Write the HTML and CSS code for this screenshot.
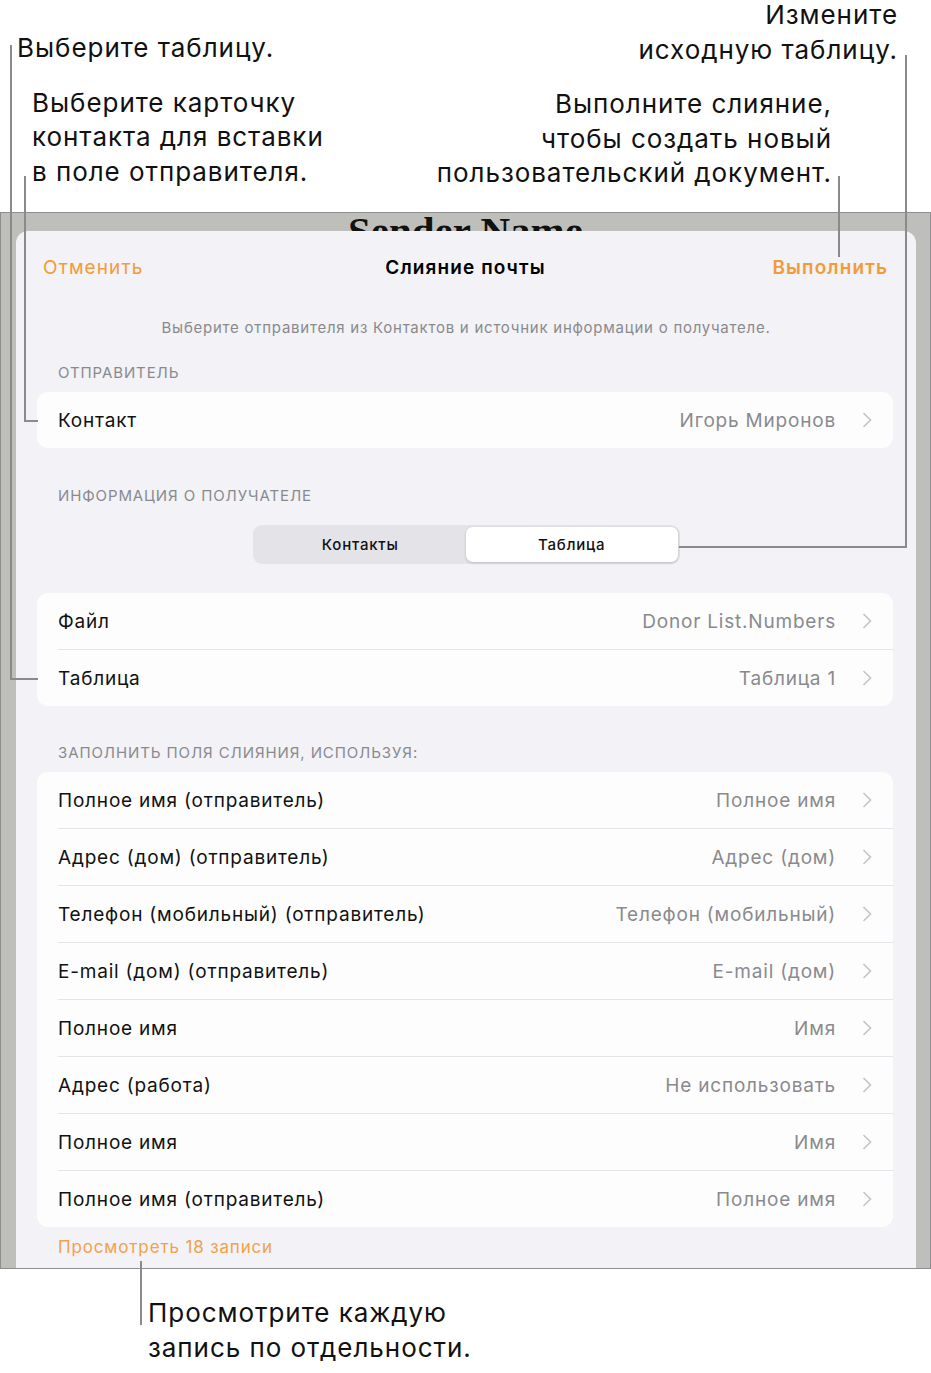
FILE: index.html
```html
<!DOCTYPE html>
<html lang="ru">
<head>
    <meta charset="UTF-8" />
    <title>Слияние почты</title>
    <link rel="stylesheet" href="styles.css">
</head>
<body>
    <div class="page">
        <div class="callouts-top">
            <div class="callouts-left">
                <p class="callout callout-table">Выберите таблицу.</p>
                <p class="callout callout-contact">Выберите карточку<br>контакта для вставки<br>в поле отправителя.</p>
            </div>
            <div class="callouts-right">
                <p class="callout callout-source">Измените<br>исходную таблицу.</p>
                <p class="callout callout-merge">Выполните слияние,<br>чтобы создать новый<br>пользовательский документ.</p>
            </div>
        </div>

        <div class="screen">
            <div class="doc-peek"><span>Sender Name</span></div>

            <div class="sheet">
                <div class="nav">
                    <span class="nav-btn">Отменить</span>
                    <span class="nav-title">Слияние почты</span>
                    <span class="nav-btn nav-btn-main">Выполнить</span>
                </div>

                <p class="hint">Выберите отправителя из Контактов и источник информации о получателе.</p>

                <h2 class="section-title first">Отправитель</h2>
                <div class="card">
                    <div class="row">
                        <span class="row-label">Контакт</span>
                        <span class="row-value">Игорь Миронов</span>
                        <svg class="chev" width="10" height="16" viewBox="0 0 10 16"><polyline points="1.5,1 8.5,8 1.5,15" /></svg>
                    </div>
                </div>

                <h2 class="section-title">Информация о получателе</h2>
                <div class="segmented">
                    <span class="seg">Контакты</span>
                    <span class="seg seg-on">Таблица</span>
                </div>

                <div class="card card-source">
                    <div class="row">
                        <span class="row-label">Файл</span>
                        <span class="row-value">Donor List.Numbers</span>
                        <svg class="chev" width="10" height="16" viewBox="0 0 10 16"><polyline points="1.5,1 8.5,8 1.5,15" /></svg>
                    </div>
                    <div class="row">
                        <span class="row-label">Таблица</span>
                        <span class="row-value">Таблица 1</span>
                        <svg class="chev" width="10" height="16" viewBox="0 0 10 16"><polyline points="1.5,1 8.5,8 1.5,15" /></svg>
                    </div>
                </div>

                <h2 class="section-title section-fields">Заполнить поля слияния, используя:</h2>
                <div class="card">
                    <div class="row">
                        <span class="row-label">Полное имя (отправитель)</span>
                        <span class="row-value">Полное имя</span>
                        <svg class="chev" width="10" height="16" viewBox="0 0 10 16"><polyline points="1.5,1 8.5,8 1.5,15" /></svg>
                    </div>
                    <div class="row">
                        <span class="row-label">Адрес (дом) (отправитель)</span>
                        <span class="row-value">Адрес (дом)</span>
                        <svg class="chev" width="10" height="16" viewBox="0 0 10 16"><polyline points="1.5,1 8.5,8 1.5,15" /></svg>
                    </div>
                    <div class="row">
                        <span class="row-label">Телефон (мобильный) (отправитель)</span>
                        <span class="row-value">Телефон (мобильный)</span>
                        <svg class="chev" width="10" height="16" viewBox="0 0 10 16"><polyline points="1.5,1 8.5,8 1.5,15" /></svg>
                    </div>
                    <div class="row">
                        <span class="row-label">E-mail (дом) (отправитель)</span>
                        <span class="row-value">E-mail (дом)</span>
                        <svg class="chev" width="10" height="16" viewBox="0 0 10 16"><polyline points="1.5,1 8.5,8 1.5,15" /></svg>
                    </div>
                    <div class="row">
                        <span class="row-label">Полное имя</span>
                        <span class="row-value">Имя</span>
                        <svg class="chev" width="10" height="16" viewBox="0 0 10 16"><polyline points="1.5,1 8.5,8 1.5,15" /></svg>
                    </div>
                    <div class="row">
                        <span class="row-label">Адрес (работа)</span>
                        <span class="row-value">Не использовать</span>
                        <svg class="chev" width="10" height="16" viewBox="0 0 10 16"><polyline points="1.5,1 8.5,8 1.5,15" /></svg>
                    </div>
                    <div class="row">
                        <span class="row-label">Полное имя</span>
                        <span class="row-value">Имя</span>
                        <svg class="chev" width="10" height="16" viewBox="0 0 10 16"><polyline points="1.5,1 8.5,8 1.5,15" /></svg>
                    </div>
                    <div class="row">
                        <span class="row-label">Полное имя (отправитель)</span>
                        <span class="row-value">Полное имя</span>
                        <svg class="chev" width="10" height="16" viewBox="0 0 10 16"><polyline points="1.5,1 8.5,8 1.5,15" /></svg>
                    </div>
                </div>

                <p class="preview-link">Просмотреть 18 записи</p>
            </div>
        </div>

        <p class="callout callout-preview">Просмотрите каждую<br>запись по отдельности.</p>

        <!-- выноски поверх экрана -->
        <div class="leader leader-table"></div>
        <div class="leader leader-contact"></div>
        <div class="leader leader-source"></div>
        <div class="leader leader-merge"></div>
        <div class="leader leader-preview"></div>
    </div>
</body>
</html>
```

FILE: styles.css
```css
body {
    margin: 0;
    background-color: #fff;
    font-family: Inter, "Noto Sans", sans-serif;
    color: #000;
}

.page {
    position: relative;
    width: 931px;
    height: 1373px;
    overflow: hidden;
}

/* Подписи-выноски */
.callout {
    margin: 0;
    font-size: 26px;
    line-height: 34.5px;
    color: #111;
    letter-spacing: 0.95px;
}

.callouts-top {
    height: 212px;
    display: flex;
    justify-content: space-between;
}

.callout-table {
    padding: 31px 0 0 17px;
}

.callout-contact {
    padding: 20px 0 0 32px;
}

.callouts-right {
    text-align: right;
}

.callout-source {
    padding: 0 33px 0 0;
    margin-top: -2px;
}

.callout-merge {
    padding: 20px 99px 0 0;
}

.callout-preview {
    padding: 27px 0 0 148px;
}

/* Экран iPad */
.screen {
    box-sizing: border-box;
    height: 1057px;
    background-color: #bebfbb;
    border: 1px solid #8e8e8e;
    overflow: hidden;
}

.doc-peek {
    height: 18px;
    overflow: hidden;
    text-align: center;
}

.doc-peek span {
    display: block;
    margin-top: -2px;
    font-family: "Liberation Serif", serif;
    font-weight: bold;
    font-size: 41px;
    line-height: 40px;
    color: #111;
}

.sheet {
    margin: 0 14px 0 15px;
    height: 1100px;
    background-color: #f2f2f7;
    border-radius: 12px 12px 0 0;
}

.nav {
    height: 72px;
    padding: 0 28px 0 27px;
    display: flex;
    align-items: center;
    justify-content: space-between;
    font-size: 19px;
    letter-spacing: 1.1px;
}

.nav-btn {
    color: #f29b38;
    width: 160px;
}

.nav-btn-main {
    font-weight: 600;
    text-align: right;
}

.nav-title {
    font-weight: 600;
    color: #000;
}

.hint {
    margin: 15px 0 0;
    text-align: center;
    font-size: 15px;
    line-height: 20px;
    letter-spacing: 0.75px;
    color: #8a8a8e;
}

.section-title {
    margin: 38px 0 9px 42px;
    font-size: 15px;
    font-weight: normal;
    line-height: 20px;
    text-transform: uppercase;
    color: #8a8a8e;
    letter-spacing: 0.9px;
}

.section-title.first {
    margin-top: 25px;
}

.section-title.section-fields {
    margin-top: 37px;
}

.card {
    margin: 0 23px 0 21px;
    background-color: #fdfdfd;
    border-radius: 11px;
    padding-left: 21px;
}

.row {
    height: 56px;
    display: flex;
    align-items: center;
    padding-right: 21px;
    font-size: 19px;
    letter-spacing: 0.8px;
}

.row + .row {
    border-top: 1px solid #e4e4e8;
}

.row-label {
    flex: 1;
    color: #111;
}

.row-value {
    color: #8a8a8e;
    margin-right: 26px;
}

.chev {
    display: block;
}

.chev polyline {
    fill: none;
    stroke: #c5c5c8;
    stroke-width: 1.6;
}

.segmented {
    width: 427px;
    height: 39px;
    margin: 19px auto 29px;
    box-sizing: border-box;
    padding: 2px;
    display: flex;
    background-color: #e3e3e8;
    border-radius: 9px;
}

.seg {
    flex: 1;
    display: flex;
    align-items: center;
    justify-content: center;
    font-size: 15px;
    font-weight: 500;
    letter-spacing: 0.8px;
    color: #111;
}

.seg-on {
    background-color: #fff;
    border-radius: 7px;
    box-shadow: 0 1px 3px rgba(0, 0, 0, 0.18);
}

.preview-link {
    margin: 10px 0 0 42px;
    font-size: 17px;
    line-height: 20px;
    letter-spacing: 0.85px;
    color: #f3a14a;
}

/* Линии выносок */
.leader {
    position: absolute;
    border: 0 solid #8a8a8a;
}

.leader-table {
    left: 10px;
    top: 45px;
    width: 26px;
    height: 633px;
    border-left-width: 2px;
    border-bottom-width: 2px;
}

.leader-contact {
    left: 24px;
    top: 176px;
    width: 12px;
    height: 244px;
    border-left-width: 2px;
    border-bottom-width: 2px;
}

.leader-source {
    left: 679px;
    top: 55px;
    width: 226px;
    height: 491px;
    border-right-width: 2px;
    border-bottom-width: 2px;
}

.leader-merge {
    left: 838px;
    top: 176px;
    height: 81px;
    border-left-width: 2px;
}

.leader-preview {
    left: 140px;
    top: 1261px;
    height: 64px;
    border-left-width: 2px;
}
```
